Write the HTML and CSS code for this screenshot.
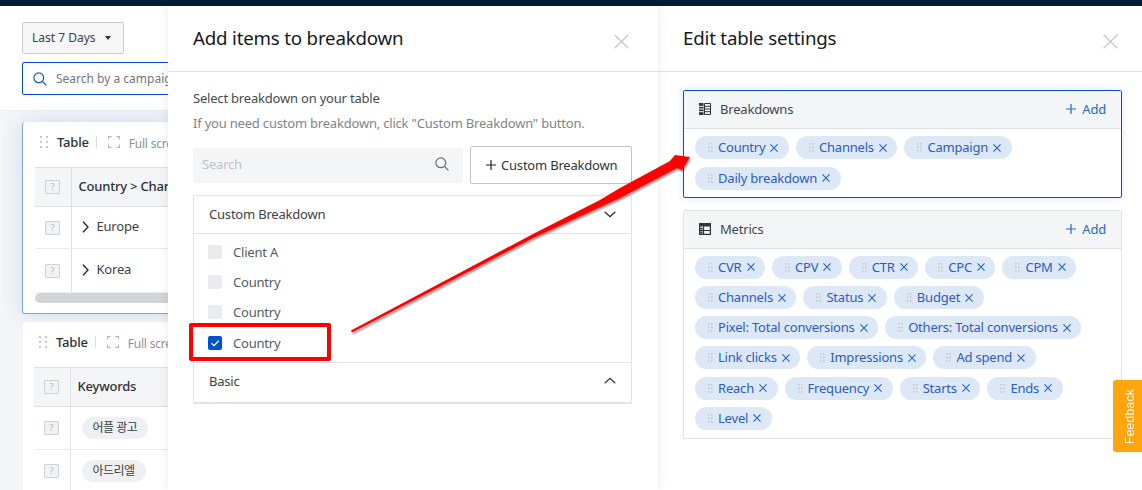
FILE: index.html
```html
<!DOCTYPE html>
<html lang="en">
<head>
<meta charset="utf-8">
<title>Edit table settings</title>
<link rel="stylesheet" href="styles.css">
</head>
<body>
<svg class="defs" width="0" height="0" aria-hidden="true">
  <symbol id="dots" viewBox="0 0 5 9"><g fill="#c3c9d2"><rect x="0" y="0" width="1.6" height="1.6"/><rect x="3" y="0" width="1.6" height="1.6"/><rect x="0" y="3.6" width="1.6" height="1.6"/><rect x="3" y="3.6" width="1.6" height="1.6"/><rect x="0" y="7.2" width="1.6" height="1.6"/><rect x="3" y="7.2" width="1.6" height="1.6"/></g></symbol>
  <symbol id="x" viewBox="0 0 9 9"><path d="M.5.5l8 8M8.500.5l-8 8" fill="none" stroke="currentColor" stroke-width="1.300"/></symbol>
  <symbol id="plus" viewBox="0 0 10 10"><path d="M5 0v10M0 5h10" fill="none" stroke="currentColor" stroke-width="1.2"/></symbol>
  <symbol id="close" viewBox="0 0 15 15"><path d="M.7.7l13.6 13.6M14.3.7L.7 14.3" fill="none" stroke="#c6cace" stroke-width="1.4"/></symbol>
  <symbol id="loupe" viewBox="0 0 14 14"><circle cx="5.8" cy="5.8" r="4.9" fill="none" stroke="currentColor" stroke-width="1.2"/><path d="M9.4 9.4l4 4" fill="none" stroke="currentColor" stroke-width="1.3"/></symbol>
  <symbol id="down" viewBox="0 0 12 7"><path d="M.7.8L6 5.8 11.3.8" fill="none" stroke="#222" stroke-width="1.2"/></symbol>
  <symbol id="up" viewBox="0 0 12 7"><path d="M.7 6.2L6 1.2l5.300 5" fill="none" stroke="#333" stroke-width="1.2"/></symbol>
  <symbol id="right" viewBox="0 0 7 12"><path d="M1 .8L6 6l-5 5.200" fill="none" stroke="#222" stroke-width="1.3"/></symbol>
  <symbol id="grip" viewBox="0 0 8 12"><g fill="#c4c8cc"><rect width="2" height="2"/><rect x="6" width="2" height="2"/><rect y="5" width="2" height="2"/><rect x="6" y="5" width="2" height="2"/><rect y="10" width="2" height="2"/><rect x="6" y="10" width="2" height="2"/></g></symbol>
  <symbol id="full" viewBox="0 0 12 12"><path d="M.6 3.500V.6h2.900M8.500.6h2.900v2.900M11.400 8.500v2.900H8.500M3.500 11.400H.6V8.500" fill="none" stroke="#aeb2b7" stroke-width="1.100"/></symbol>
</svg>

<div class="topbar"></div>

<main class="workspace">
  <div class="backdrop">
    <div class="backdrop-inner">
      <header class="filters">
        <button class="range">Last 7 Days <span class="caret"></span></button>
        <div class="campaign-search">
          <svg class="campaign-icon"><use href="#loupe"/></svg>
          <span>Search by a campaign name</span>
        </div>
      </header>
      <div class="cards">
        <section class="card card-active">
          <div class="card-bar">
            <svg class="grip"><use href="#grip"/></svg>
            <span class="card-title">Table</span>
            <span class="card-sep"></span>
            <svg class="full"><use href="#full"/></svg>
            <span class="card-full">Full screen</span>
          </div>
          <table class="grid">
            <tr class="grid-head"><td class="idx"><span class="q">?</span></td><td class="name">Country &gt; Channels</td></tr>
            <tr><td class="idx"><span class="q">?</span></td><td class="cell cell-tree"><svg class="chev"><use href="#right"/></svg>Europe</td></tr>
            <tr><td class="idx"><span class="q">?</span></td><td class="cell cell-tree"><svg class="chev"><use href="#right"/></svg>Korea</td></tr>
          </table>
          <div class="scrollbar"></div>
        </section>
        <section class="card card-plain">
          <div class="card-bar">
            <svg class="grip"><use href="#grip"/></svg>
            <span class="card-title">Table</span>
            <span class="card-sep"></span>
            <svg class="full"><use href="#full"/></svg>
            <span class="card-full">Full screen</span>
          </div>
          <table class="grid">
            <tr class="grid-head"><td class="idx"><span class="q">?</span></td><td class="name">Keywords</td></tr>
            <tr><td class="idx"><span class="q">?</span></td><td class="cell"><span class="kw">어플 광고</span></td></tr>
            <tr><td class="idx"><span class="q">?</span></td><td class="cell"><span class="kw">아드리엘</span></td></tr>
          </table>
        </section>
      </div>
    </div>
  </div>

  <section class="drawer drawer-add">
    <header class="drawer-head">
      <h2>Add items to breakdown</h2>
      <svg class="drawer-close"><use href="#close"/></svg>
    </header>
    <div class="add-body">
      <p class="add-label">Select breakdown on your table</p>
      <p class="add-hint">If you need custom breakdown, click "Custom Breakdown" button.</p>
      <div class="add-tools">
        <div class="add-search"><span>Search</span><svg class="add-loupe"><use href="#loupe"/></svg></div>
        <button class="add-custom"><svg class="add-plus"><use href="#plus"/></svg>Custom Breakdown</button>
      </div>
      <div class="accordion">
        <div class="acc-head"><span>Custom Breakdown</span><svg class="acc-chev"><use href="#down"/></svg></div>
        <ul class="acc-list">
          <li><span class="check"></span>Client A</li>
          <li><span class="check"></span>Country</li>
          <li><span class="check"></span>Country</li>
          <li><span class="check check-on"><svg class="tick" viewBox="0 0 14 14"><path d="M3.500 7.300l2.500 2.400 4.800-5" fill="none" stroke="#fff" stroke-width="1.300"/></svg></span>Country</li>
        </ul>
        <div class="acc-head acc-last"><span>Basic</span><svg class="acc-chev"><use href="#up"/></svg></div>
      </div>
    </div>
  </section>

  <section class="drawer drawer-edit">
    <header class="drawer-head">
      <h2>Edit table settings</h2>
      <svg class="drawer-close"><use href="#close"/></svg>
    </header>
    <div class="edit-body">
      <div class="box box-active">
        <div class="box-head">
          <svg class="box-icon" viewBox="0 0 12 12"><path d="M0 0h4.500v12H0z" fill="#333"/><path d="M5.500.5h6v11h-6zM5.500 3.300h6M5.500 6h6M5.500 8.700h6" fill="none" stroke="#333" stroke-width="1"/><path d="M0 3.300h4.500M0 6h4.500M0 8.700h4.500" stroke="#fff" stroke-width="1"/></svg>
          <span class="box-title">Breakdowns</span>
          <span class="box-add"><svg class="box-plus"><use href="#plus"/></svg>Add</span>
        </div>
        <div class="tags">
          <span class="tag"><svg class="tag-dots"><use href="#dots"/></svg>Country<svg class="tag-x"><use href="#x"/></svg></span>
          <span class="tag"><svg class="tag-dots"><use href="#dots"/></svg>Channels<svg class="tag-x"><use href="#x"/></svg></span>
          <span class="tag"><svg class="tag-dots"><use href="#dots"/></svg>Campaign<svg class="tag-x"><use href="#x"/></svg></span>
          <span class="tag"><svg class="tag-dots"><use href="#dots"/></svg>Daily breakdown<svg class="tag-x"><use href="#x"/></svg></span>
        </div>
      </div>
      <div class="box box-metrics">
        <div class="box-head">
          <svg class="box-icon" viewBox="0 0 12 12"><path d="M.6.6h10.800v10.800H.6z" fill="none" stroke="#333" stroke-width="1.200"/><path d="M0 0h12v3.500H0z" fill="#333"/><path d="M0 7.500h12M4.500 3.500V12" stroke="#333" stroke-width="1.200" fill="none"/><path d="M1.200 4.700h2.300v1.800H1.200zM1.200 8.600h2.300v2H1.200z" fill="#333"/></svg>
          <span class="box-title">Metrics</span>
          <span class="box-add"><svg class="box-plus"><use href="#plus"/></svg>Add</span>
        </div>
        <div class="tags">
          <span class="tag"><svg class="tag-dots"><use href="#dots"/></svg>CVR<svg class="tag-x"><use href="#x"/></svg></span>
          <span class="tag"><svg class="tag-dots"><use href="#dots"/></svg>CPV<svg class="tag-x"><use href="#x"/></svg></span>
          <span class="tag"><svg class="tag-dots"><use href="#dots"/></svg>CTR<svg class="tag-x"><use href="#x"/></svg></span>
          <span class="tag"><svg class="tag-dots"><use href="#dots"/></svg>CPC<svg class="tag-x"><use href="#x"/></svg></span>
          <span class="tag"><svg class="tag-dots"><use href="#dots"/></svg>CPM<svg class="tag-x"><use href="#x"/></svg></span>
          <span class="tag"><svg class="tag-dots"><use href="#dots"/></svg>Channels<svg class="tag-x"><use href="#x"/></svg></span>
          <span class="tag"><svg class="tag-dots"><use href="#dots"/></svg>Status<svg class="tag-x"><use href="#x"/></svg></span>
          <span class="tag"><svg class="tag-dots"><use href="#dots"/></svg>Budget<svg class="tag-x"><use href="#x"/></svg></span>
          <span class="tag"><svg class="tag-dots"><use href="#dots"/></svg>Pixel: Total conversions<svg class="tag-x"><use href="#x"/></svg></span>
          <span class="tag"><svg class="tag-dots"><use href="#dots"/></svg>Others: Total conversions<svg class="tag-x"><use href="#x"/></svg></span>
          <span class="tag"><svg class="tag-dots"><use href="#dots"/></svg>Link clicks<svg class="tag-x"><use href="#x"/></svg></span>
          <span class="tag"><svg class="tag-dots"><use href="#dots"/></svg>Impressions<svg class="tag-x"><use href="#x"/></svg></span>
          <span class="tag"><svg class="tag-dots"><use href="#dots"/></svg>Ad spend<svg class="tag-x"><use href="#x"/></svg></span>
          <span class="tag"><svg class="tag-dots"><use href="#dots"/></svg>Reach<svg class="tag-x"><use href="#x"/></svg></span>
          <span class="tag"><svg class="tag-dots"><use href="#dots"/></svg>Frequency<svg class="tag-x"><use href="#x"/></svg></span>
          <span class="tag"><svg class="tag-dots"><use href="#dots"/></svg>Starts<svg class="tag-x"><use href="#x"/></svg></span>
          <span class="tag"><svg class="tag-dots"><use href="#dots"/></svg>Ends<svg class="tag-x"><use href="#x"/></svg></span>
          <span class="tag"><svg class="tag-dots"><use href="#dots"/></svg>Level<svg class="tag-x"><use href="#x"/></svg></span>
        </div>
      </div>
    </div>
  </section>
</main>

<div class="redbox"></div>
<svg class="arrow" viewBox="0 0 1142 490" aria-hidden="true">
  <polygon points="351,330.500 533,234 600,200 620,188 670,161 675,155 690,157 682,170 677,168 620,198 533,238 352,332.500" fill="#fe0000"/>
</svg>
<button class="feedback">Feedback</button>
</body>
</html>
```

FILE: styles.css
```css
* { box-sizing: border-box; }
html, body { margin: 0; height: 490px; overflow: hidden; }
body {
  position: relative;
  background: #fff;
  color: #333a44;
  font-family: "Noto Sans", "Noto Sans CJK KR", sans-serif;
  font-size: 13px;
  line-height: 20px;
  letter-spacing: -.2px;
}
.defs { position: absolute; }
button { font: inherit; letter-spacing: inherit; color: inherit; }
svg { display: block; flex: none; }

.topbar { height: 6px; background: #041a36; }
.workspace { display: flex; height: 484px; }

/* Page behind the drawers */
.backdrop { width: 168px; flex: none; overflow: hidden; background: #f4f5f7; }
.backdrop-inner { width: 700px; }
.filters {
  height: 105px;
  padding: 16px 0 0 22px;
  background: #fff;
  display: flex;
  flex-direction: column;
  gap: 8px;
  border-bottom: 1px solid #eef0f2;
  letter-spacing: 0;
}
.range {
  width: 102px;
  height: 32px;
  padding: 0 0 0 9px;
  display: flex;
  align-items: center;
  gap: 8px;
  background: #f6f6f7;
  border: 1px solid #c9cdd1;
  border-radius: 2px;
  font-size: 12px;
  color: #3c4249;
}
.caret { border: 3px solid transparent; border-top: 4px solid #333; border-bottom: 0; margin-left: 1px; }
.campaign-search {
  width: 500px;
  height: 33px;
  display: flex;
  align-items: center;
  gap: 9px;
  padding-left: 10px;
  border: 1px solid #0052cc;
  border-radius: 2px;
  font-size: 12px;
  color: #6f757c;
}
.campaign-icon { width: 14px; height: 14px; color: #0f5cc8; }
.cards { padding: 11px 0 0 22px; display: flex; flex-direction: column; gap: 8px; }
.card { width: 640px; background: #fff; border-radius: 3px; }
.card-active {
  height: 192px;
  padding: 0 0 0 12px;
  border: 1px solid #7ea6e4;
  border-top: 0;
  box-shadow: 0 0 22px rgba(0, 82, 204, .16);
}
.card-plain { height: 170px; margin-left: 1px; padding-left: 11px; }
.card-bar { height: 45px; display: flex; align-items: center; padding: 0 0 5px 5px; }
.grip { width: 8px; height: 12px; }
.card-title { margin-left: 9px; font-weight: 500; color: #2b3036; }
.card-sep { width: 1px; height: 12px; background: #dcdfe2; margin: 0 11px 0 7px; }
.full { width: 12px; height: 12px; }
.card-full { margin: 4px 0 0 9px; font-size: 12px; color: #8d9298; white-space: nowrap; }

.grid { width: 620px; border-collapse: collapse; table-layout: fixed; }
.grid td { padding: 0; border-bottom: 1px solid #e9ebed; }
.grid tr { height: 43px; }
.grid .grid-head { height: 39px; background: #f4f5f7; }
.card-active .grid tr:nth-child(2) { height: 42px; }
.card-active .grid tr:nth-child(3) { height: 44px; }
.grid-head td { border-top: 1px solid #dfe1e4; border-bottom-color: #dcdfe2; }
.idx { width: 36px; border-right: 1px solid #dfe1e4; text-align: center; }
.q {
  display: inline-block;
  width: 15px;
  height: 14px;
  margin: 0 0 3px -1px;
  border: 1px solid #cfd2d6;
  border-radius: 1px;
  background: #f1f2f4;
  color: #b6babf;
  font-size: 9px;
  line-height: 12px;
  vertical-align: middle;
}
.grid .name { padding: 0 0 2px 7px; font-weight: 500; color: #2b3036; }
.grid .cell { padding-left: 11px; color: #3a3f46; }
.grid .cell-tree { padding: 0 0 3px 10px; }
.chev { display: inline-block; width: 7px; height: 12px; margin-right: 8px; vertical-align: -2px; }
.kw {
  display: inline-block;
  height: 22px;
  padding: 0 11px;
  background: #eef0f3;
  border-radius: 11px;
  font-size: 12px;
  letter-spacing: -.5px;
  line-height: 22px;
}
.scrollbar { width: 600px; height: 10px; background: #d2d5d8; border-radius: 5px; }

/* Drawers */
.drawer { background: #fff; }
.drawer-add {
  width: 490px;
  flex: none;
  position: relative;
  z-index: 1;
  box-shadow: 0 0 10px rgba(0, 0, 0, .09);
}
.drawer-edit { flex: 1; }
.drawer-head {
  height: 66px;
  display: flex;
  align-items: flex-start;
  justify-content: space-between;
  border-bottom: 1px solid #e0e2e4;
  padding: 19px 29px 0 25px;
}
.drawer-edit .drawer-head { padding-right: 24px; }
h2 { margin: 0; font-size: 18.720px; line-height: 26px; font-weight: 400; letter-spacing: -.2px; color: #15191e; }
.drawer-close { width: 15px; height: 15px; margin-top: 9px; }

.add-body { padding: 16px 26px 0 25px; }
.add-label, .add-hint { margin: 0; }
.add-label { color: #444a52; }
.add-hint { margin-top: 5px; color: #80858c; }
.add-tools { margin-top: 13px; display: flex; align-items: center; gap: 7px; }
.add-search {
  width: 270px;
  height: 35px;
  display: flex;
  align-items: center;
  justify-content: space-between;
  padding: 0 14px 2px 9px;
  background: #f4f5f7;
  border-radius: 3px;
  color: #bfc3c9;
}
.add-loupe { width: 14px; height: 14px; color: #6a6f75; }
.add-custom {
  flex: 1;
  height: 38px;
  display: flex;
  align-items: center;
  gap: 5px;
  padding: 0 0 0 15px;
  background: #fff;
  border: 1px solid #c2c6ca;
  border-radius: 2px;
  color: #30353b;
  white-space: nowrap;
}
.add-plus { width: 10px; height: 10px; color: #222; }
.accordion { margin-top: 11px; border: 1px solid #e2e4e6; border-bottom-width: 2px; }
.acc-head {
  height: 38px;
  display: flex;
  align-items: center;
  justify-content: space-between;
  padding: 0 15px 1px;
  border-bottom: 1px solid #e2e4e6;
  color: #3c4149;
}
.acc-last { border-bottom: 0; height: 39px; padding-bottom: 3px; }
.acc-chev { width: 12px; height: 7px; }
.acc-list { list-style: none; margin: 0; padding: 2.700px 0 4.300px; border-bottom: 1px solid #e2e4e6; }
.acc-list li {
  height: 30.250px;
  display: flex;
  align-items: center;
  gap: 11px;
  padding-left: 14px;
  color: #555b64;
}
.check { width: 14px; height: 14px; border-radius: 2px; background: #e9ebee; }
.check-on { background: #0052cc; }
.tick { width: 14px; height: 14px; }

.edit-body { padding: 18px 20px 0 25px; display: flex; flex-direction: column; gap: 12px; }
.box { border: 1px solid #dfe2e5; border-radius: 2px; }
.box-active { border-color: #0052cc; box-shadow: 0 0 8px rgba(0, 82, 204, .14); }
.box-head {
  height: 38px;
  display: flex;
  align-items: center;
  padding: 0 15px 1px;
  background: #f4f5f7;
  border-bottom: 1px solid #dfe2e5;
}
.box-icon { width: 12px; height: 12px; }
.box-title { margin-left: 9px; color: #42474f; }
.box-add { margin-left: auto; display: flex; align-items: center; gap: 6px; color: #2569c9; }
.box-plus { width: 10px; height: 10px; }
.tags { display: flex; flex-wrap: wrap; gap: 7.500px 7px; padding: 7px 11px 7.500px; }
.box-metrics .tags { gap: 7.200px 7px; padding: 6.900px 11px 8.100px; }
.tag {
  height: 23px;
  display: flex;
  align-items: center;
  padding: 0 10.500px 1px 13px;
  background: #dde8f6;
  border-radius: 12px;
  color: #2c5bc5;
  white-space: nowrap;
}
.tag-dots { width: 5px; height: 9px; margin: 1px 5px 0 0; }
.tag-x { width: 8px; height: 8px; margin: 1px 0 0 5px; color: #2466c8; }

/* Overlays */
.redbox {
  position: absolute;
  z-index: 2;
  left: 189px;
  top: 323px;
  width: 142px;
  height: 38px;
  border: 4px solid #fe0000;
  border-radius: 2px;
}
.arrow {
  position: absolute;
  z-index: 2;
  left: 0;
  top: 0;
  width: 1142px;
  height: 490px;
  pointer-events: none;
  filter: drop-shadow(1px 2px 1px rgba(0, 0, 0, .45));
}
.feedback {
  position: absolute;
  z-index: 3;
  right: 0;
  top: 380px;
  width: 29px;
  height: 72px;
  padding: 0 5px 0 0;
  border: 0;
  border-radius: 0 3px 3px 0;
  background: #ffa50d;
  color: #fff;
  font-family: "Liberation Sans", sans-serif;
  font-size: 12px;
  letter-spacing: .3px;
  writing-mode: vertical-rl;
  transform: rotate(180deg);
}
```
